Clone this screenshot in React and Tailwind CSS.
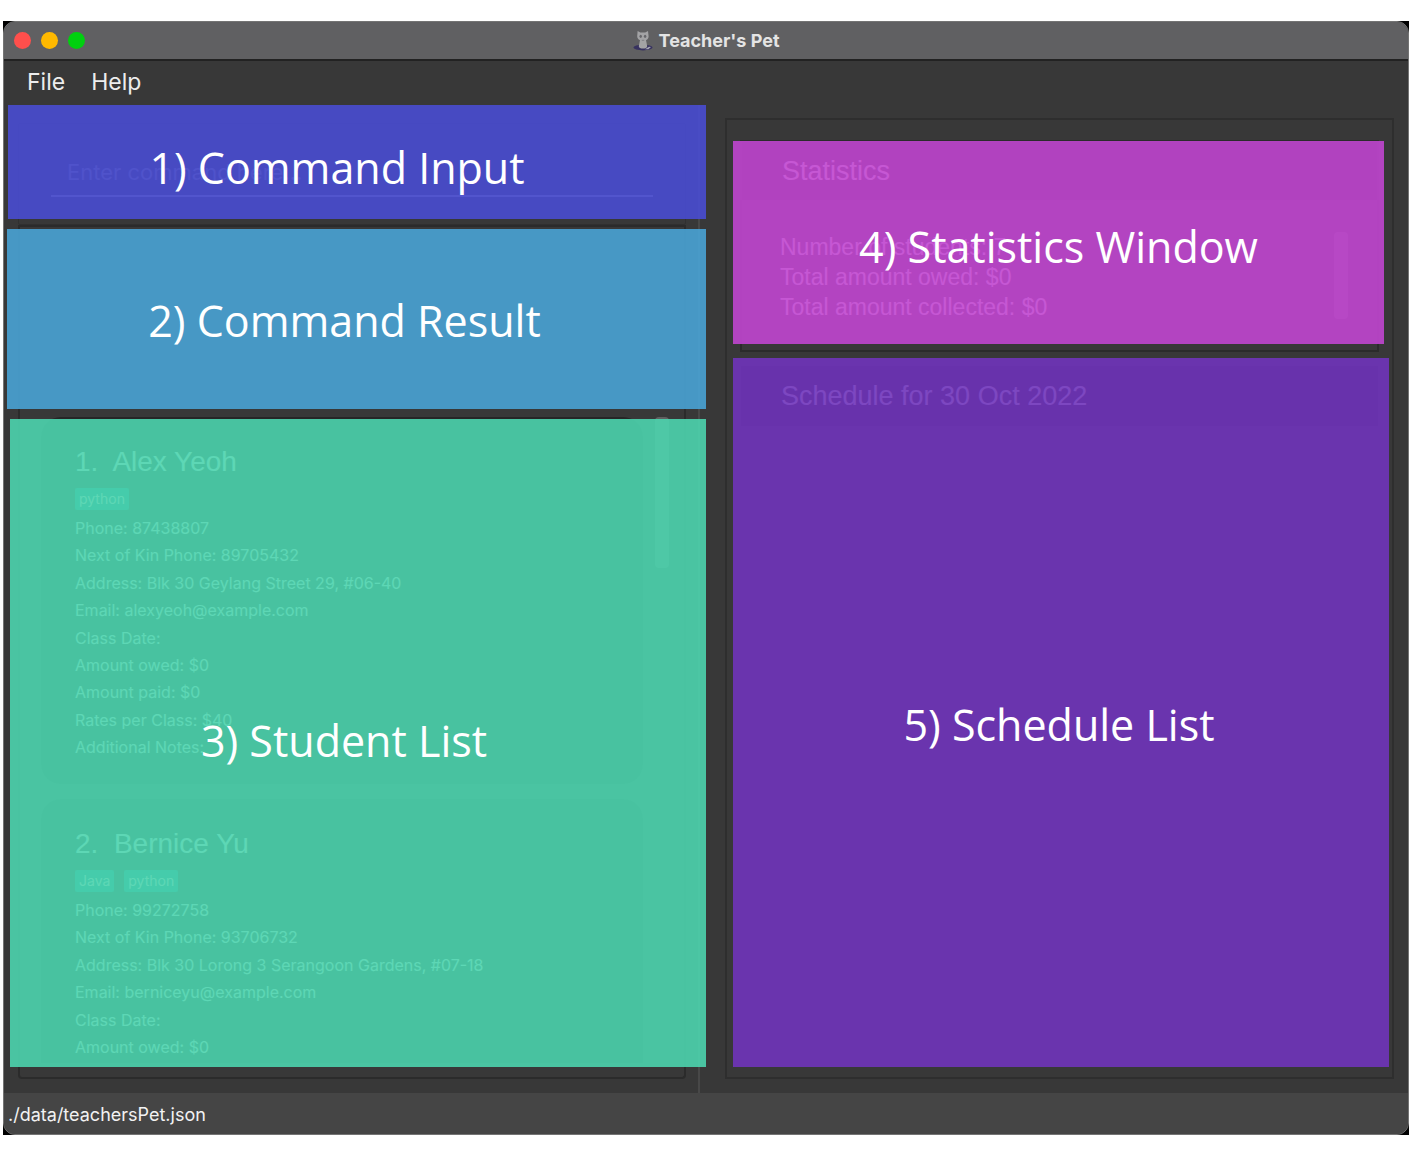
const students = [
  {
    name: "Alex Yeoh",
    tags: ["python"],
    listHeight: "h-[246px]",
    fields: [
      "Phone: 87438807",
      "Next of Kin Phone: 89705432",
      "Address: Blk 30 Geylang Street 29, #06-40",
      "Email: alexyeoh@example.com",
      "Class Date:",
      "Amount owed: $0",
      "Amount paid: $0",
      "Rates per Class: $40",
      "Additional Notes:",
    ],
  },
  {
    name: "Bernice Yu",
    tags: ["Java", "python"],
    listHeight: "h-[164px]",
    fields: [
      "Phone: 99272758",
      "Next of Kin Phone: 93706732",
      "Address: Blk 30 Lorong 3 Serangoon Gardens, #07-18",
      "Email: berniceyu@example.com",
      "Class Date:",
      "Amount owed: $0",
    ],
  },
];

function Callout({ className, children }) {
  return (
    <div
      className={`pointer-events-none absolute z-10 flex items-center justify-center whitespace-nowrap font-['Open_Sans','Noto_Sans',sans-serif] text-[43px] leading-[60px] text-white ${className}`}
    >
      <span>{children}</span>
    </div>
  );
}

function CatIcon() {
  return (
    <svg viewBox="0 0 20 20" className="size-5" aria-hidden="true">
      <ellipse cx="10" cy="16.600" rx="9.600" ry="2.800" fill="#37325f" />
      <path d="M12 18.200l4-2.400 2 .300-2.600 2.200z" fill="#a5a5b4" />
      <path
        d="M4.600 0l2.800 1.600h4.800L15 0l.600 5.200c0 2.200-1.200 3.400-2.600 3.900l1.200 6.200c0 1.500-1.800 2.300-4.200 2.300s-4.200-.800-4.200-2.300L7 9.100C5.600 8.600 4.200 7.400 4.200 5.200z"
        fill="#a3a3a5"
      />
      <ellipse cx="7.700" cy="5.300" rx="1.200" ry="1.600" fill="#66666a" />
      <ellipse cx="12.100" cy="5.300" rx="1.200" ry="1.600" fill="#66666a" />
      <path d="M8.800 9.300h2.400" stroke="#7f7f84" strokeWidth="1" />
    </svg>
  );
}

function StudentCard({ index, student }) {
  return (
    <li className="shrink-0 rounded-[20px] bg-[#262626] px-[34px] pt-[29px] pb-[23px]">
      <h2 className="font-['Liberation_Sans',sans-serif] text-[28px] leading-8 whitespace-pre">
        {index}.{"  "}
        {student.name}
      </h2>
      <div className="mt-2.5 flex gap-2.5">
        {student.tags.map((tag) => (
          <span key={tag} className="rounded-xs bg-[#00868e] px-1 text-[14px] leading-[22px]">
            {tag}
          </span>
        ))}
      </div>
      <ul className={`mt-[5px] flex flex-col justify-between text-[16px] leading-[27px] ${student.listHeight}`}>
        {student.fields.map((field) => (
          <li key={field}>{field}</li>
        ))}
      </ul>
    </li>
  );
}

export default function App() {
  return (
    <div className="h-screen bg-white pt-[21px] pr-1.5 pb-[31px] pl-[3px] font-[Inter,sans-serif] text-[#f2f2f2]">
      <div className="h-full bg-black">
        <div className="flex h-full flex-col overflow-hidden rounded-xl border border-[#747474] bg-[#383838]">
          <header className="relative flex h-[39px] shrink-0 items-center justify-center border-b-2 border-[#222222] bg-[#606062]">
            <div className="absolute left-2.5 flex gap-2.5">
              <button type="button" aria-label="Close" className="size-[17px] rounded-full bg-[#ff4f4c]" />
              <button type="button" aria-label="Minimize" className="size-[17px] rounded-full bg-[#ffb900]" />
              <button type="button" aria-label="Zoom" className="size-[17px] rounded-full bg-[#00d00f]" />
            </div>
            <h1 className="flex items-center gap-1.5 text-[18px] font-bold text-[#e4e4e4]">
              <CatIcon />
              Teacher's Pet
            </h1>
          </header>

          <nav className="flex h-11 shrink-0 items-center gap-[26px] px-[23px] pb-0.5 text-[23px] text-[#ededed]">
            <button type="button">File</button>
            <button type="button">Help</button>
          </nav>

          <main className="grid min-h-0 flex-1 grid-cols-[minmax(0,696fr)_minmax(0,708fr)]">
            <div className="z-10 flex min-h-0 flex-col border-r-2 border-[#484848]">
              <section className="relative h-[120px] shrink-0 pt-[18px] pr-3 pl-3.5">
                <div className="h-full rounded-b-xs border border-[#303030] px-8 pt-7">
                  <input
                    aria-label="Command"
                    placeholder="Enter command here..."
                    className="h-[45px] w-full border-b-2 border-[#a0a0a0] bg-transparent px-4 pb-1 text-[22px] outline-none placeholder:text-[#8a8a8a]"
                  />
                </div>
                <Callout className="top-0 -right-2 left-1 h-[114px] bg-[#494cd2]/90 pt-3 pr-10">
                  1) Command Input
                </Callout>
              </section>

              <section className="relative h-[184px] shrink-0 pr-3 pl-3.5">
                <div className="h-full border-x-2 border-t-2 border-[#2b2b2b]" />
                <Callout className="top-1 -right-2 bottom-0 left-[3px] bg-[#49a3d5]/90 pt-1 pr-6">
                  2) Command Result
                </Callout>
              </section>

              <section className="relative min-h-0 flex-1 pr-3 pb-3.5 pl-3.5">
                <div className="flex h-full items-start justify-between overflow-hidden rounded-b-sm border-x-2 border-b-2 border-[#2b2b2b] pt-2 pr-[15px] pb-3.5 pl-[21px]">
                  <ul className="flex h-full w-[602px] shrink flex-col gap-[15px] overflow-hidden">
                    {students.map((student, i) => (
                      <StudentCard key={student.name} index={i + 1} student={student} />
                    ))}
                  </ul>
                  <div className="h-[151px] w-3.5 rounded-sm bg-[#606060]" />
                </div>
                <Callout className="top-2.5 -right-2 bottom-[26px] left-1.5 bg-[#4cd4ae]/90 pr-7 pb-1">
                  3) Student List
                </Callout>
              </section>
            </div>

            <div className="min-h-0 pt-[13px] pr-3.5 pb-3.5 pl-[25px]">
              <div className="flex h-full flex-col gap-[13px] border-2 border-[#2e2e2e] pt-5 pr-[13px] pb-3.5 pl-[13px]">
                <section className="relative h-[212px] shrink-0 border-2 border-[#2b2b2b]">
                  <h2 className="bg-[#262626] px-10 font-['Liberation_Sans',sans-serif] text-[27px] leading-[58px]">
                    Statistics
                  </h2>
                  <div className="flex items-start justify-between pt-8 pr-[29px] pl-[38px]">
                    <div className="font-['Liberation_Sans',sans-serif] text-[23px] leading-[30px]">
                      <p>Number of students: 7</p>
                      <p>Total amount owed: $0</p>
                      <p>Total amount collected: $0</p>
                    </div>
                    <div className="h-[87px] w-3.5 rounded-sm bg-[#606060]" />
                  </div>
                  <Callout className="-top-px -right-[7px] bottom-1.5 -left-[9px] bg-[#c146d0]/90 pt-2">
                    4) Statistics Window
                  </Callout>
                </section>

                <section className="relative flex-1 border border-[#333333]">
                  <h2 className="bg-[#262626] px-10 font-['Liberation_Sans',sans-serif] text-[27px] leading-[60px]">
                    Schedule for 30 Oct 2022
                  </h2>
                  <Callout className="-top-2 -right-[11px] -bottom-[5px] -left-2 bg-[#7034bb]/90 pt-6 pr-1">
                    5) Schedule List
                  </Callout>
                </section>
              </div>
            </div>
          </main>

          <footer className="flex h-[41px] shrink-0 items-center bg-[#454545] px-1 pt-0.5 text-[18px]">
            ./data/teachersPet.json
          </footer>
        </div>
      </div>
    </div>
  );
}
